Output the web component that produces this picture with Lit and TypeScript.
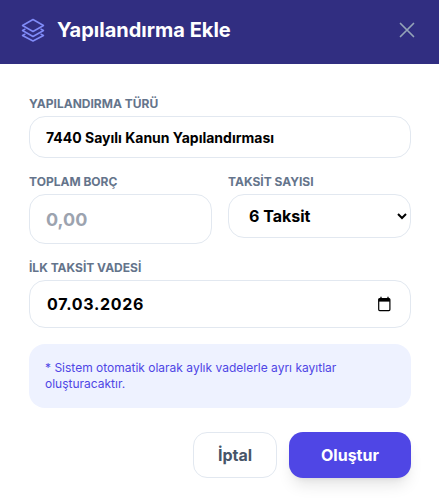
import { LitElement, html, css } from "lit";
import { customElement } from "lit/decorators.js";

@customElement("app-root")
export class AppRoot extends LitElement {
  static styles = css`
    :host { display: block; width: 439px; height: 504px; background: #fff; font-family: Inter, "Liberation Sans", sans-serif; overflow: hidden; }
    * { box-sizing: border-box; }
    .head { height: 64px; background: #312e81; display: flex; align-items: center; padding: 0 22px 4px 21px; gap: 12px; }
    .head svg.logo { width: 24px; height: 24px; color: #818cf8; flex: none; }
    .head h2 { margin: 0; color: #fff; font-size: 20px; font-weight: 700; flex: 1; }
    .head svg.x { width: 20px; height: 20px; color: #94a3b8; flex: none; }
    form { padding: 32px 28px 0 29px; display: flex; flex-direction: column; gap: 16px; }
    label { display: block; font-size: 12px; line-height: 14px; font-weight: 700; color: #64748b; margin-bottom: 6px; position: relative; top: 1px; }
    .ctl { width: 100%; display: block; border: 1px solid #e2e8f0; border-radius: 16px; background: #fff; font-family: inherit; color: #000; outline: none; }
    .t1 { height: 42px; padding: 0 16px; font-size: 14px; font-weight: 700; }
    .row { display: grid; grid-template-columns: 183px 183px; gap: 16px; align-items: start; }
    .t2 { height: 50px; padding: 0 16px; font-size: 18px; font-weight: 700; }
    .t2::placeholder { color: #9ca3af; opacity: 1; }
    select.ctl { height: 44px; padding: 0 16px; font-size: 16px; font-weight: 700; }
    .date { height: 48px; display: flex; align-items: center; justify-content: space-between; padding: 0 18px 0 17px; font-size: 16px; font-weight: 700; letter-spacing: 0.7px; }
    .date svg { width: 16px; height: 16px; }
    .note { height: 64px; margin: 0; padding: 16px 16px; background: #eef2ff; border-radius: 16px; color: #4f46e5; font-size: 12px; line-height: 16px; font-weight: 400; }
    .btns { display: flex; justify-content: flex-end; gap: 12px; margin-top: 8px; }
    button { height: 46px; border-radius: 14px; font-family: inherit; font-size: 16px; font-weight: 700; padding: 0; }
    .cancel { width: 84px; background: #fff; border: 1px solid #e2e8f0; color: #475569; }
    .ok { width: 122px; background: #4f46e5; border: none; color: #fff; box-shadow: 0 10px 15px -3px rgba(0,0,0,.1), 0 4px 6px -4px rgba(0,0,0,.1); }
  `;

  render() {
    return html`
      <header class="head">
        <svg class="logo" viewBox="0 0 24 24" fill="none" stroke="currentColor" stroke-width="1.5" stroke-linejoin="round" stroke-linecap="round">
          <path d="M12 1.5 22.5 7.5 12 13.5 1.5 7.5z"></path>
          <path d="M4 11.2 1.5 12.5 12 18.5l10.5-6L20 11.2"></path>
          <path d="M4 16.2 1.5 17.5 12 23l10.5-5.5L20 16.2"></path>
        </svg>
        <h2>Yapılandırma Ekle</h2>
        <svg class="x" viewBox="0 0 20 20" fill="none" stroke="currentColor" stroke-width="1.7" stroke-linecap="round">
          <path d="M3.5 3.5l13 13M16.5 3.5l-13 13"></path>
        </svg>
      </header>
      <form>
        <div>
          <label>YAPILANDIRMA TÜRÜ</label>
          <input class="ctl t1" value="7440 Sayılı Kanun Yapılandırması" />
        </div>
        <div class="row">
          <div>
            <label>TOPLAM BORÇ</label>
            <input class="ctl t2" placeholder="0,00" />
          </div>
          <div>
            <label>TAKSİT SAYISI</label>
            <select class="ctl"><option>6 Taksit</option></select>
          </div>
        </div>
        <div>
          <label>İLK TAKSİT VADESİ</label>
          <div class="ctl date">
            <span>07.03.2026</span>
            <svg viewBox="0 0 16 16" fill="none">
              <path d="M5 .8v2M12 .8v2" stroke="#000" stroke-width="1.3"></path>
              <rect x="2.7" y="2.6" width="11.2" height="12" rx="1" stroke="#000" stroke-width="1.2"></rect>
              <rect x="2.7" y="2.6" width="11.2" height="3" fill="#000"></rect>
            </svg>
          </div>
        </div>
        <p class="note">* Sistem otomatik olarak aylık vadelerle ayrı kayıtlar oluşturacaktır.</p>
        <div class="btns">
          <button type="button" class="cancel">İptal</button>
          <button type="button" class="ok">Oluştur</button>
        </div>
      </form>
    `;
  }
}
